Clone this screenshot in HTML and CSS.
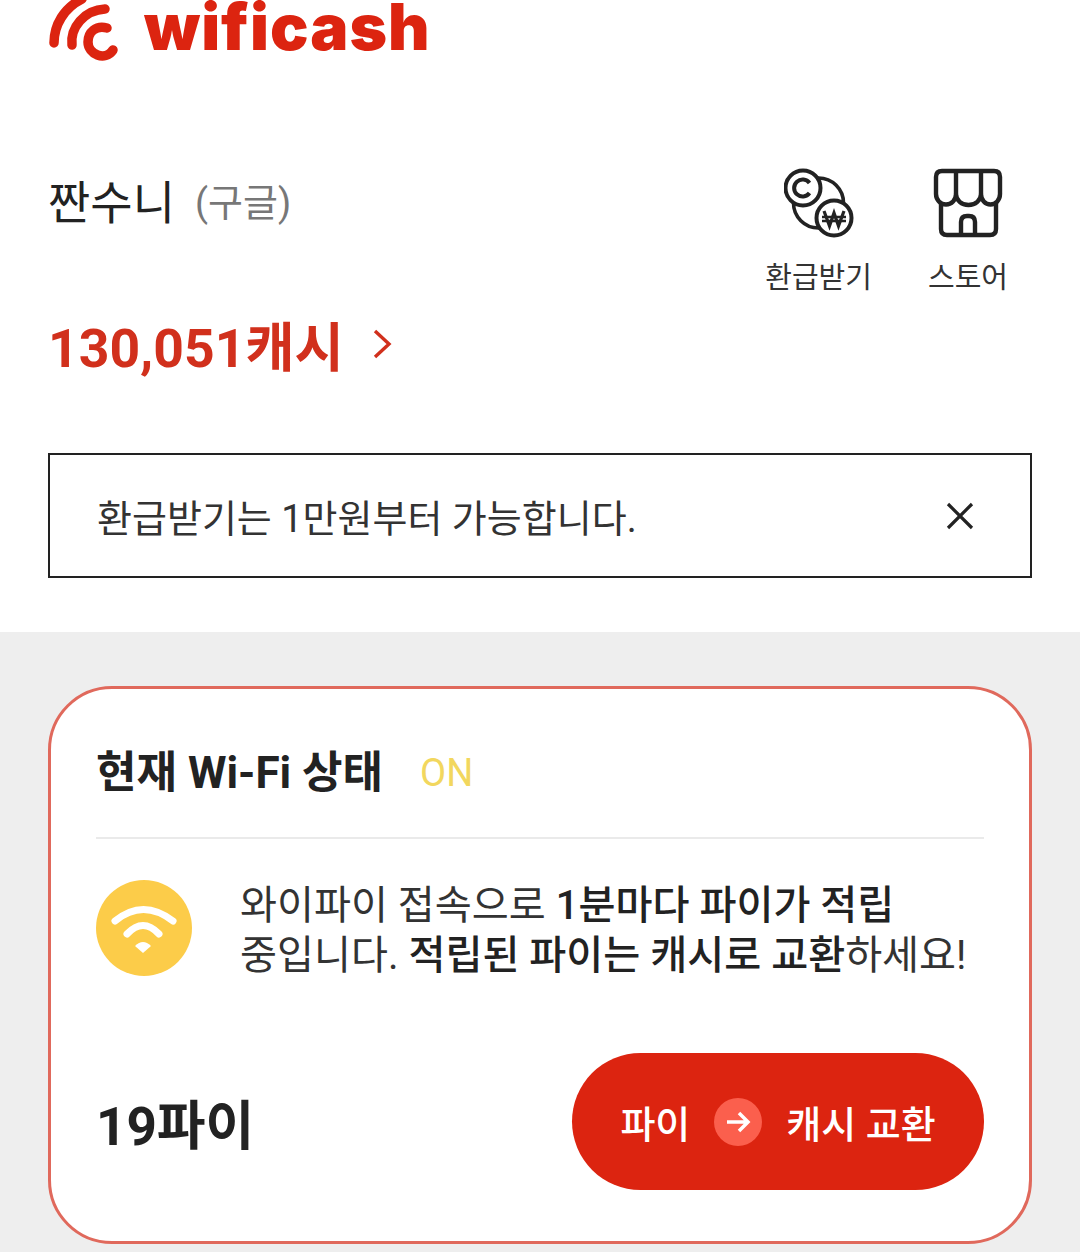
FILE: index.html
```html
<!DOCTYPE html>
<html lang="ko">
<head>
  <meta charset="UTF-8" />
  <meta name="viewport" content="width=device-width, initial-scale=1.0" />
  <title>wificash</title>
  <link rel="stylesheet" href="styles.css">
</head>
<body>
  <div class="top">
    <div class="logo">
      <svg class="logo-mark" viewBox="0 0 72 62" width="72" height="62" fill="none" stroke="#dc2410" stroke-width="9.5" stroke-linecap="round">
        <path d="M6 43 C6 25 16 8 34 -1"/>
        <path d="M24 45 C22 28 36 10 57 9"/>
        <path d="M59 28 C48 25 40 32 40 42 C40 54 57 62 65 50"/>
      </svg>
      <span class="logo-text">wificash</span>
    </div>

    <div class="account">
      <div class="account-info">
        <div class="user"><span class="user-name">짠수니</span><span class="user-type">(구글)</span></div>
        <div class="balance"><span>130,051캐시</span>
          <svg class="chevron" viewBox="0 0 20 32" width="20" height="32" fill="none" stroke="#d1301c" stroke-width="3.4"><path d="M3 3 L17 16 L3 29"/></svg>
        </div>
      </div>
      <div class="actions">
        <div class="action">
          <svg viewBox="0 0 70 70" width="70" height="70" fill="none" stroke="#222" stroke-width="3.6">
            <circle cx="34.500" cy="35" r="25"/>
            <circle cx="19" cy="20" r="17.500" fill="#fff" stroke-width="4"/>
            <path d="M25.500 15 A8.500 8.500 0 1 0 25.500 25" stroke-width="4"/>
            <circle cx="50" cy="50" r="17.500" fill="#fff" stroke-width="4"/>
            <path d="M40 43 L45.500 58 L50 45 L54.500 58 L60 43" stroke-width="3.200"/>
            <path d="M38 49 H62 M38 53 H62" stroke-width="2.600"/>
          </svg>
          <span>환급받기</span>
        </div>
        <div class="action">
          <svg viewBox="0 0 70 70" width="70" height="70" fill="none" stroke="#222" stroke-width="4.400" stroke-linejoin="round">
            <path d="M9 3 H61 Q67 3 67 9 V26 A9.500 10.500 0 0 1 48 26 A12.500 11 0 0 1 23 26 A10 10.500 0 0 1 3 26 V9 Q3 3 9 3 Z"/>
            <path d="M23 3 V26 M48 3 V26"/>
            <path d="M8 35 V61 Q8 67 14 67 H57 Q63 67 63 61 V35"/>
            <path d="M28 67 V54 Q28 48 34 48 H36 Q42 48 42 54 V67"/>
          </svg>
          <span>스토어</span>
        </div>
      </div>
    </div>

    <div class="notice">
      <span>환급받기는 1만원부터 가능합니다.</span>
      <svg viewBox="0 0 30 30" width="30" height="30" fill="none" stroke="#222" stroke-width="3.200"><path d="M3 3 L27 27 M27 3 L3 27"/></svg>
    </div>
  </div>

  <div class="content">
    <div class="card">
      <div class="card-title">
        <h2>현재 Wi-Fi 상태</h2>
        <span class="status">ON</span>
      </div>
      <div class="card-message">
        <svg class="wifi-icon" viewBox="0 0 96 96" width="96" height="96">
          <circle cx="48" cy="48" r="48" fill="#fccc49"/>
          <g fill="none" stroke="#fff" stroke-width="7" stroke-linecap="round">
            <path d="M19 41 Q47 18 77 41"/>
            <path d="M31 54 Q47 37 63 54"/>
          </g>
          <path d="M39 66 Q47 58 55 66 L47 73 Z" fill="#fff"/>
        </svg>
        <p>와이파이 접속으로 <b>1분마다 파이가 적립</b> 중입니다. <b>적립된 파이는 캐시로 교환</b>하세요!</p>
      </div>
      <div class="card-bottom">
        <div class="pie-count">19파이</div>
        <div class="exchange-btn">
          <span>파이</span>
          <span class="arrow">
            <svg viewBox="0 0 26 26" width="26" height="26" fill="none" stroke="#fff" stroke-width="3.500"><path d="M2 13 H23 M14 4 L23 13 L14 22"/></svg>
          </span>
          <span>캐시 교환</span>
        </div>
      </div>
    </div>
  </div>
</body>
</html>
```
FILE: styles.css
```css
* {
  box-sizing: border-box;
}

html, body {
  margin: 0;
  padding: 0;
}

body {
  width: 1080px;
  height: 1252px;
  overflow: hidden;
  background: #fff;
  color: #222;
  font-family: Roboto, "Noto Sans CJK KR", sans-serif;
}

.top {
  padding: 0 48px;
  height: 632px;
}

.logo {
  display: flex;
  align-items: flex-start;
  gap: 24px;
  height: 62px;
}

.logo-text {
  margin-top: -3px;
  font-family: Inter, sans-serif;
  font-size: 64px;
  font-weight: 900;
  line-height: 60px;
  letter-spacing: 1px;
  color: #dc2410;
}

.account {
  display: flex;
  justify-content: space-between;
  margin-top: 106px;
}

.user {
  display: flex;
  align-items: center;
  gap: 20px;
  line-height: 70px;
}

.user-name {
  font-size: 46px;
}

.user-type {
  font-size: 38px;
  color: #777;
}

.balance {
  display: flex;
  align-items: center;
  gap: 28px;
  margin-top: 81px;
  font-size: 53.500px;
  font-weight: 700;
  line-height: 60px;
  color: #d1301c;
}

.chevron {
  margin-bottom: 10px;
}

.actions {
  display: flex;
  gap: 56px;
  padding-right: 24px;
}

.action {
  display: flex;
  flex-direction: column;
  align-items: center;
  gap: 20px;
  font-size: 29px;
  line-height: 40px;
  color: #333;
}

.notice {
  display: flex;
  align-items: center;
  justify-content: space-between;
  height: 125px;
  margin-top: 74px;
  padding: 0 55px 0 47px;
  border: 2px solid #222;
  font-size: 38px;
  color: #333;
}

.content {
  height: 620px;
  padding: 54px 48px 0;
  background: #eee;
}

.card {
  height: 558px;
  padding: 0 45px;
  background: #fff;
  border: 3px solid #e0695c;
  border-radius: 64px;
}

.card-title {
  display: flex;
  align-items: center;
  gap: 37px;
  height: 150px;
  padding-top: 50px;
  padding-bottom: 30px;
  border-bottom: 2px solid #eaeaea;
}

.card-title h2 {
  margin: 0;
  font-size: 44px;
  font-weight: 700;
  line-height: 68px;
}

.status {
  font-size: 38px;
  color: #f2d75e;
}

.card-message {
  display: flex;
  gap: 48px;
  margin-top: 41px;
}

.wifi-icon {
  flex: none;
}

.card-message p {
  margin: 0;
  padding-top: 1px;
  font-size: 40.200px;
  line-height: 50px;
  word-break: keep-all;
  color: #333;
}

.card-message b {
  font-weight: 500;
  color: #222;
}

.card-bottom {
  display: flex;
  align-items: center;
  justify-content: space-between;
  margin-top: 72px;
}

.pie-count {
  font-size: 53px;
  font-weight: 700;
}

.exchange-btn {
  display: flex;
  align-items: center;
  justify-content: center;
  gap: 24px;
  width: 412px;
  height: 137px;
  border-radius: 69px;
  background: #dc2410;
  color: #fff;
  font-size: 38px;
  font-weight: 500;
}

.arrow {
  display: flex;
  align-items: center;
  justify-content: center;
  width: 48px;
  height: 48px;
  border-radius: 50%;
  background: #fb5f4d;
}
```
